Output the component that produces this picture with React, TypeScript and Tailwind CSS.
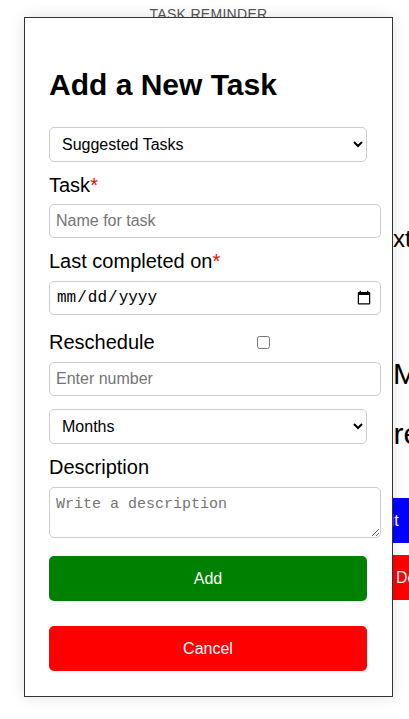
import React, { useState } from 'react';

const fieldClass =
  'w-[332px] h-[34px] rounded-[5px] border border-[#cccccc] bg-white px-[6px] text-[16px] text-black placeholder:text-[#757575] outline-none';

const selectClass =
  'w-[318px] h-[35px] rounded-[5px] border border-[#cccccc] bg-white pl-[8px] text-[16px] text-black outline-none';

const RequiredLabel: React.FC<{ text: string; className?: string }> = ({ text, className }) => (
  <label className={`block text-[20px] leading-[23px] text-black ${className ?? ''}`}>
    {text}
    <span className="text-[#ff0000]">*</span>
  </label>
);

const App: React.FC = () => {
  const [task, setTask] = useState('');
  const [reschedule, setReschedule] = useState(false);

  return (
    <div className="relative h-[719px] w-[409px] overflow-hidden bg-white font-['Liberation_Sans',Arial,sans-serif]">
      {/* Page behind the modal */}
      <header className="pl-[8px] pt-[6px] text-center text-[14px] leading-[16px] tracking-[0.3px] text-[#555555]">
        TASK REMINDER
      </header>

      <div className="ml-[300px] flex flex-col whitespace-nowrap text-black">
        <p className="mt-[203px] pl-[77px] text-[24px] leading-[28px]">Extinguisher</p>
        <p className="mt-[104px] pl-[93px] text-[30px] leading-[34px]">Monthly</p>
        <p className="mt-[26px] pl-[35px] text-[30px] leading-[34px]">Ignore</p>
        <div className="ml-[60px] mt-[47px] flex h-[45px] w-[120px] items-center bg-[#0000ff] pl-[11px] text-[16px] text-white">
          Edit
        </div>
        <div className="ml-[60px] mt-[12px] flex h-[45px] w-[120px] items-center bg-[#ff0000] pl-[36px] text-[16px] text-white">
          Delete
        </div>
      </div>

      {/* Modal */}
      <div className="absolute left-[24px] top-[17px] h-[680px] w-[369px] border border-[#333333] bg-white px-[24px] pt-[50px] shadow-[0_0_14px_rgba(0,0,0,0.12)]">
        <h2 className="text-[30px] font-bold leading-[34px] text-black">Add a New Task</h2>

        <form className="flex flex-col" onSubmit={(e) => e.preventDefault()}>
          <select className={`mt-[25px] ${selectClass}`} defaultValue="">
            <option value="">Suggested Tasks</option>
            <option value="filter">Change air filter</option>
            <option value="smoke">Test smoke detectors</option>
          </select>

          <RequiredLabel text="Task" className="mt-[12px]" />
          <input
            type="text"
            value={task}
            onChange={(e) => setTask(e.target.value)}
            placeholder="Name for task"
            className={`mt-[7px] ${fieldClass}`}
          />

          <RequiredLabel text="Last completed on" className="mt-[12px]" />
          <input
            type="date"
            className={`mt-[8px] ${fieldClass} font-['Liberation_Mono',monospace]`}
          />

          <div className="mt-[16px] flex items-center">
            <label className="w-[208px] text-[20px] leading-[23px] text-black">Reschedule</label>
            <input
              type="checkbox"
              checked={reschedule}
              onChange={(e) => setReschedule(e.target.checked)}
              className="h-[13px] w-[13px]"
            />
          </div>

          <input type="number" placeholder="Enter number" className={`mt-[8px] ${fieldClass}`} />

          <select className={`mt-[13px] ${selectClass}`} defaultValue="months">
            <option value="days">Days</option>
            <option value="weeks">Weeks</option>
            <option value="months">Months</option>
            <option value="years">Years</option>
          </select>

          <label className="mt-[12px] block text-[20px] leading-[23px] text-black">Description</label>
          <textarea
            placeholder="Write a description"
            className="mt-[8px] h-[51px] w-[332px] rounded-[5px] border border-[#cccccc] bg-white px-[6px] py-[8px] font-['Liberation_Mono',monospace] text-[15px] leading-[18px] text-black placeholder:text-[#757575] outline-none"
          />

          <button
            type="submit"
            className="mt-[18px] h-[45px] w-[318px] rounded-[5px] bg-[#008000] text-[16px] text-white"
          >
            Add
          </button>
          <button
            type="button"
            className="mt-[25px] h-[45px] w-[318px] rounded-[5px] bg-[#ff0000] text-[16px] text-white"
          >
            Cancel
          </button>
        </form>
      </div>
    </div>
  );
};

export default App;
